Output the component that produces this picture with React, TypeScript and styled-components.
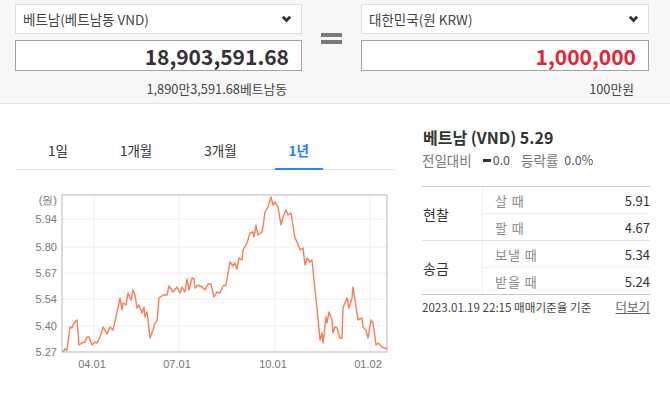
import React from "react";
import styled, { createGlobalStyle } from "styled-components";

const GlobalStyle = createGlobalStyle`
  body {
    margin: 0;
    background: #fff;
    font-family: "Noto Sans CJK KR", "Noto Sans", sans-serif;
    color: #333;
  }
`

const Page = styled.div`
  width: 670px;
  height: 400px;
  overflow: hidden;
`

const Converter = styled.div`
  display: grid;
  grid-template-columns: 287px 59px 288px;
  padding: 4px 21px 0 15px;
  height: 104px;
  box-sizing: border-box;
  background: #f7f7f7;
  border-bottom: 1px solid #e3e3e3;
`

const CurrencyBox = styled.div`
  display: flex;
  flex-direction: column;
`

const Select = styled.div`
  height: 30px;
  box-sizing: border-box;
  border: 1px solid #dcdcdc;
  background: #fff;
  display: flex;
  align-items: center;
  justify-content: space-between;
  padding: 0 9px 0 7px;
  font-size: 13.5px;
  color: #444;
`

const AmountInput = styled.div<{ $red?: boolean }>`
  margin-top: 6px;
  height: 31px;
  box-sizing: border-box;
  border: 1px solid #a3a3a3;
  background: #fff;
  display: flex;
  align-items: center;
  justify-content: flex-end;
  padding-right: 12px;
  font-size: 21px;
  font-weight: 700;
  color: ${p => (p.$red ? "#e8232f" : "#333")};
`

const AmountText = styled.div`
  margin-top: 10px;
  padding-right: 15px;
  text-align: right;
  font-size: 12.8px;
  line-height: 16px;
  color: #444;
`

const EqualSign = styled.div`
  justify-self: center;
  margin-top: 29px;
  width: 21px;
  display: flex;
  flex-direction: column;
  gap: 3px;
`

const EqualBar = styled.div`
  height: 4px;
  background: #7a7a7a;
`

const Main = styled.div`
  display: flex;
  gap: 26px;
  padding: 0 20px 0 15px;
`

const ChartColumn = styled.div`
  width: 381px;
  display: flex;
  flex-direction: column;
`

const Tabs = styled.div`
  margin-top: 28px;
  display: flex;
  gap: 24px;
  padding-left: 19px;
  border-bottom: 1px solid #e4e4e4;
`

const Tab = styled.div<{ $active?: boolean }>`
  height: 38px;
  box-sizing: border-box;
  padding: 0 14px;
  display: flex;
  align-items: center;
  font-size: 13.5px;
  color: ${p => (p.$active ? "#1a7fff" : "#333")};
  font-weight: ${p => (p.$active ? 700 : 400)};
  border-bottom: 2px solid ${p => (p.$active ? "#2a86ff" : "transparent")};
  margin-bottom: -1px;
`

const ChartBox = styled.div`
  margin-top: 10px;
  height: 195px;
`

const InfoColumn = styled.div`
  width: 228px;
  display: flex;
  flex-direction: column;
`

const Title = styled.div`
  margin-top: 23px;
  font-size: 16px;
  line-height: 20px;
  font-weight: 700;
  color: #333;
  padding-left: 1px;
`

const Change = styled.div`
  margin-top: 4px;
  display: flex;
  align-items: center;
  font-size: 13.5px;
  line-height: 18px;
  color: #777;
`

const Flat = styled.span`
  display: inline-block;
  width: 8px;
  height: 3px;
  background: #333;
  margin: 0 2px 0 11px;
`

const ChangeValue = styled.span<{ $gap?: number }>`
  color: #555;
  font-size: 12.5px;
  margin-right: ${p => p.$gap ?? 0}px;
`

const RateTable = styled.div`
  margin-top: 17px;
  border-top: 1px solid #c9c9c9;
  border-bottom: 1px solid #c9c9c9;
`

const Group = styled.div`
  display: grid;
  grid-template-columns: 61px 1fr;
  & + & {
    border-top: 1px solid #e2e2e2;
  }
`

const GroupLabel = styled.div`
  display: flex;
  align-items: center;
  padding-left: 1px;
  border-right: 1px solid #efefef;
  font-size: 14px;
  color: #333;
`

const Row = styled.div`
  height: 26px;
  display: flex;
  align-items: center;
  justify-content: space-between;
  padding-left: 12px;
  font-size: 13px;
  & + & {
    border-top: 1px solid #efefef;
  }
`

const RowLabel = styled.span`
  color: #8a8a8a;
  letter-spacing: 1px;
`

const RowValue = styled.span`
  color: #333;
`

const Footer = styled.div`
  margin-top: 4px;
  display: flex;
  justify-content: space-between;
  align-items: center;
  font-size: 11.6px;
  line-height: 16px;
  color: #444;
`

const MoreLink = styled.a`
  font-size: 12.5px;
  color: #666;
  text-decoration: underline;
`

function Chevron() {
  return (
    <svg width="11" height="8" viewBox="0 0 11 8">
      <polyline points="1.8,1.8 5.5,5.5 9.2,1.8" fill="none" stroke="#333" strokeWidth="2.8" />
    </svg>
  )
}

const line = [
  [63, 352], [65, 349], [67, 350], [70, 327], [72, 328], [73, 325], [75, 322], [77, 320],
  [79, 345], [82, 343], [85, 342], [87, 337], [89, 337], [92, 345], [95, 342], [97, 343],
  [100, 337], [103, 327], [107, 334], [110, 327], [113, 330], [116, 317], [120, 298],
  [122, 310], [123, 303], [126, 305], [128, 293], [131, 300], [133, 290], [135, 295],
  [137, 308], [139, 305], [142, 313], [144, 307], [145, 317], [147, 312], [150, 338],
  [153, 330], [155, 323], [157, 321], [159, 298], [163, 295], [167, 295], [169, 286],
  [173, 292], [177, 287], [180, 293], [182, 287], [185, 292], [187, 279], [189, 290],
  [192, 278], [194, 279], [195, 288], [198, 285], [202, 287], [205, 290], [208, 284],
  [211, 284], [214, 297], [217, 292], [220, 293], [223, 286], [226, 285], [230, 262],
  [233, 266], [235, 263], [237, 269], [239, 258], [242, 260], [243, 250], [247, 243],
  [250, 233], [253, 232], [254, 237], [256, 225], [258, 235], [262, 232], [263, 227],
  [265, 212], [268, 207], [271, 197], [273, 205], [275, 202], [278, 207], [281, 225],
  [283, 217], [286, 210], [288, 215], [291, 213], [295, 238], [297, 242], [300, 250],
  [303, 248], [305, 265], [307, 258], [310, 262], [312, 260], [315, 290], [317, 308],
  [320, 340], [322, 333], [323, 343], [326, 317], [327, 323], [329, 312], [332, 320],
  [333, 333], [335, 327], [337, 328], [340, 338], [342, 338], [343, 308], [347, 298],
  [349, 308], [352, 298], [353, 287], [356, 307], [358, 320], [362, 318], [363, 327],
  [366, 330], [368, 338], [371, 320], [373, 323], [376, 345], [378, 343], [382, 347],
  [387, 349],
]

const yTicks = [
  { label: "5.94", y: 219 },
  { label: "5.80", y: 247 },
  { label: "5.67", y: 273 },
  { label: "5.54", y: 299 },
  { label: "5.40", y: 326 },
  { label: "5.27", y: 352 },
]

const xTicks = [
  { label: "04.01", x: 94 },
  { label: "07.01", x: 179 },
  { label: "10.01", x: 275 },
  { label: "01.02", x: 370 },
]

function RateChart() {
  const pts = line.map(p => p.join(",")).join(" ")
  return (
    <svg width="381" height="195" viewBox="15 180 381 195"
         fontFamily="'Liberation Sans', Arial, sans-serif" fontSize="11">
      {yTicks.slice(0, 5).map(t => (
        <line key={t.label} x1="62" x2="387" y1={t.y} y2={t.y} stroke="#eeeeee" />
      ))}
      {xTicks.map(t => (
        <line key={t.label} x1={t.x} x2={t.x} y1="195" y2="352" stroke="#eeeeee" />
      ))}
      <rect x="62" y="195" width="325" height="157" fill="none" stroke="#cfcfcf" strokeWidth="1.5" />
      <text x="57" y="204" textAnchor="end" fill="#777">(원)</text>
      {yTicks.map(t => (
        <text key={t.label} x="57" y={t.y + 4} textAnchor="end" fill="#777">{t.label}</text>
      ))}
      {xTicks.map(t => (
        <text key={t.label} x={t.x - 2} y="368" textAnchor="middle" fill="#777">{t.label}</text>
      ))}
      <polyline points={pts} fill="none" stroke="#ff7a55" strokeWidth="1.4" strokeLinejoin="round" />
    </svg>
  )
}

export default function App() {
  return (
    <Page>
      <GlobalStyle />
      <Converter>
        <CurrencyBox>
          <Select>베트남(베트남동 VND)<Chevron /></Select>
          <AmountInput>18,903,591.68</AmountInput>
          <AmountText>1,890만3,591.68베트남동</AmountText>
        </CurrencyBox>
        <EqualSign>
          <EqualBar />
          <EqualBar />
        </EqualSign>
        <CurrencyBox>
          <Select>대한민국(원 KRW)<Chevron /></Select>
          <AmountInput $red>1,000,000</AmountInput>
          <AmountText>100만원</AmountText>
        </CurrencyBox>
      </Converter>
      <Main>
        <ChartColumn>
          <Tabs>
            <Tab>1일</Tab>
            <Tab>1개월</Tab>
            <Tab>3개월</Tab>
            <Tab $active>1년</Tab>
          </Tabs>
          <ChartBox>
            <RateChart />
          </ChartBox>
        </ChartColumn>
        <InfoColumn>
          <Title>베트남 (VND) 5.29</Title>
          <Change>
            전일대비<Flat /><ChangeValue $gap={11}>0.0</ChangeValue>
            등락률&nbsp;&nbsp;<ChangeValue>0.0%</ChangeValue>
          </Change>
          <RateTable>
            <Group>
              <GroupLabel>현찰</GroupLabel>
              <div>
                <Row><RowLabel>살 때</RowLabel><RowValue>5.91</RowValue></Row>
                <Row><RowLabel>팔 때</RowLabel><RowValue>4.67</RowValue></Row>
              </div>
            </Group>
            <Group>
              <GroupLabel>송금</GroupLabel>
              <div>
                <Row><RowLabel>보낼 때</RowLabel><RowValue>5.34</RowValue></Row>
                <Row><RowLabel>받을 때</RowLabel><RowValue>5.24</RowValue></Row>
              </div>
            </Group>
          </RateTable>
          <Footer>
            <span>2023.01.19 22:15 매매기준율 기준</span>
            <MoreLink>더보기</MoreLink>
          </Footer>
        </InfoColumn>
      </Main>
    </Page>
  )
}
